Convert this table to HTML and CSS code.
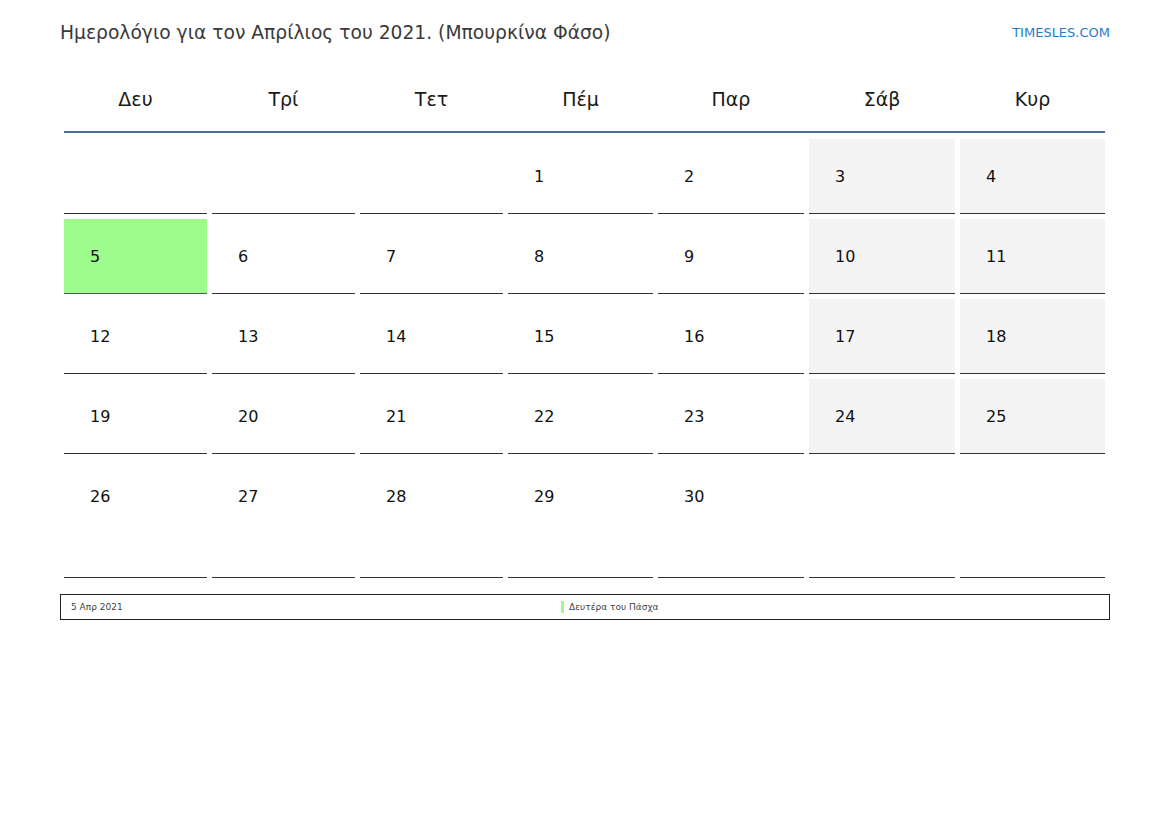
FILE: index.html
```html
<!DOCTYPE html>
<html lang="el">
<head>
<meta charset="utf-8">
<title>Ημερολόγιο Απρίλιος 2021</title>
<link rel="stylesheet" href="styles.css">
</head>
<body>
<div class="page">
  <div class="top">
    <h1 class="title">Ημερολόγιο για τον Απρίλιος του 2021. (Μπουρκίνα Φάσο)</h1>
    <a class="brand" href="#">TIMESLES.COM</a>
  </div>
  <div class="cal">
    <div class="head">
      <div class="dn">Δευ</div><div class="dn">Τρί</div><div class="dn">Τετ</div><div class="dn">Πέμ</div><div class="dn">Παρ</div><div class="dn">Σάβ</div><div class="dn">Κυρ</div>
    </div>
    <div class="grid">
      <div class="cell"></div><div class="cell"></div><div class="cell"></div><div class="cell">1</div><div class="cell">2</div><div class="cell we">3</div><div class="cell we">4</div>
      <div class="cell hol">5</div><div class="cell">6</div><div class="cell">7</div><div class="cell">8</div><div class="cell">9</div><div class="cell we">10</div><div class="cell we">11</div>
      <div class="cell">12</div><div class="cell">13</div><div class="cell">14</div><div class="cell">15</div><div class="cell">16</div><div class="cell we">17</div><div class="cell we">18</div>
      <div class="cell">19</div><div class="cell">20</div><div class="cell">21</div><div class="cell">22</div><div class="cell">23</div><div class="cell we">24</div><div class="cell we">25</div>
      <div class="cell tall">26</div><div class="cell tall">27</div><div class="cell tall">28</div><div class="cell tall">29</div><div class="cell tall">30</div><div class="cell tall"></div><div class="cell tall"></div>
    </div>
  </div>
  <div class="legend">
    <div class="ldate">5 Απρ 2021</div>
    <div class="lname"><span class="mark"></span>Δευτέρα του Πάσχα</div>
  </div>
</div>
</body>
</html>
```
FILE: styles.css
```css
html, body {
  margin: 0;
  padding: 0;
  background: #fff;
}
body {
  font-family: "DejaVu Sans", "Noto Sans", sans-serif;
  color: #111;
}
.page {
  width: 1050px;
  padding: 20px 0 0 60px;
}
.top {
  display: flex;
  justify-content: space-between;
  align-items: center;
  height: 26px;
}
.title {
  margin: 0;
  font-size: 18.7px;
  font-weight: normal;
  color: #3a3a3a;
  line-height: 26px;
}
.brand {
  font-size: 13px;
  color: #2b7bc4;
  text-decoration: none;
  margin-top: -2px;
}
.cal {
  margin: 22px 5px 0 4px;
}
.head, .grid {
  display: grid;
  grid-template-columns: 143px 143px 143px 145px 146px 146px 145px;
  column-gap: 5px;
}
.head {
  height: 63px;
  border-bottom: 2px solid #4a6b97;
}
.dn {
  font-size: 19px;
  line-height: 63px;
  text-align: center;
  color: #1a1a1a;
}
.grid {
  margin-top: 6px;
  row-gap: 5px;
}
.cell {
  box-sizing: border-box;
  height: 75px;
  border-bottom: 1px solid #333;
  padding: 0 0 0 26px;
  font-size: 16px;
  line-height: 76px;
  color: #111;
}
.cell.we { background: #f4f4f4; }
.cell.hol { background: #9efc8c; border-bottom-color: #555; }
.cell.tall {
  height: 119px;
}
.legend {
  margin-top: 16px;
  border: 1px solid #222;
  height: 24px;
  display: grid;
  grid-template-columns: 500px 1fr;
  align-items: center;
  font-size: 9px;
  color: #444;
}
.ldate { padding-left: 10px; }
.lname {
  display: flex;
  align-items: center;
}
.mark {
  display: inline-block;
  width: 3px;
  height: 12px;
  background: #9efc8c;
  margin-right: 5px;
}
```
